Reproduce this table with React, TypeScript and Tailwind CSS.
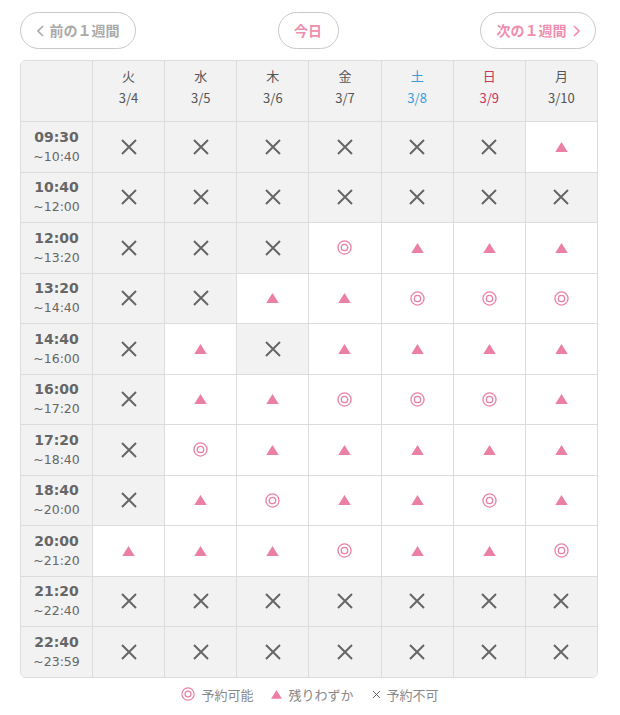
import React from "react";

type Mark = "x" | "t" | "o";

const days = [
  { name: "火", date: "3/4", color: "text-[#555]" },
  { name: "水", date: "3/5", color: "text-[#555]" },
  { name: "木", date: "3/6", color: "text-[#555]" },
  { name: "金", date: "3/7", color: "text-[#555]" },
  { name: "土", date: "3/8", color: "text-[#3b9ad9]" },
  { name: "日", date: "3/9", color: "text-[#c9365f]" },
  { name: "月", date: "3/10", color: "text-[#555]" },
];

const rows: { from: string; to: string; marks: Mark[] }[] = [
  { from: "09:30", to: "~10:40", marks: ["x", "x", "x", "x", "x", "x", "t"] },
  { from: "10:40", to: "~12:00", marks: ["x", "x", "x", "x", "x", "x", "x"] },
  { from: "12:00", to: "~13:20", marks: ["x", "x", "x", "o", "t", "t", "t"] },
  { from: "13:20", to: "~14:40", marks: ["x", "x", "t", "t", "o", "o", "o"] },
  { from: "14:40", to: "~16:00", marks: ["x", "t", "x", "t", "t", "t", "t"] },
  { from: "16:00", to: "~17:20", marks: ["x", "t", "t", "o", "o", "o", "t"] },
  { from: "17:20", to: "~18:40", marks: ["x", "o", "t", "t", "t", "t", "t"] },
  { from: "18:40", to: "~20:00", marks: ["x", "t", "o", "t", "t", "o", "t"] },
  { from: "20:00", to: "~21:20", marks: ["t", "t", "t", "o", "t", "t", "o"] },
  { from: "21:20", to: "~22:40", marks: ["x", "x", "x", "x", "x", "x", "x"] },
  { from: "22:40", to: "~23:59", marks: ["x", "x", "x", "x", "x", "x", "x"] },
];

function Cross({ size = 18 }: { size?: number }) {
  return (
    <svg width={size} height={size} viewBox="0 0 18 18">
      <path d="M2 2 L16 16 M16 2 L2 16" stroke="#666" strokeWidth="2" />
    </svg>
  );
}

function Tri({ w = 13 }: { w?: number }) {
  return (
    <svg width={w} height={w * 0.8} viewBox="0 0 13 10.4">
      <path d="M6.5 0 L13 10.4 L0 10.4 Z" fill="#eb80a3" />
    </svg>
  );
}

function Double({ size = 15 }: { size?: number }) {
  return (
    <svg width={size} height={size} viewBox="0 0 16 16">
      <circle cx="8" cy="8" r="7" fill="none" stroke="#eb80a3" strokeWidth="1.4" />
      <circle cx="8" cy="8" r="3.4" fill="none" stroke="#eb80a3" strokeWidth="1.4" />
    </svg>
  );
}

function Chevron({ dir, color }: { dir: "l" | "r"; color: string }) {
  return (
    <svg width="7" height="12" viewBox="0 0 7 12">
      <path
        d={dir === "l" ? "M6 1 L1 6 L6 11" : "M1 1 L6 6 L1 11"}
        fill="none"
        stroke={color}
        strokeWidth="1.6"
      />
    </svg>
  );
}

export default function App() {
  return (
    <div
      className="w-[620px] h-[715px] bg-white text-[#555]"
      style={{ fontFamily: '"Noto Sans CJK JP", "Noto Sans", sans-serif' }}
    >
      {/* NAV */}
      <div className="flex w-[576px] ml-[20px] items-center justify-between pt-[12px]">
        <button className="flex h-[37px] w-[116px] items-center justify-center gap-[6px] rounded-full border border-[#c8c8c8] text-[14px] font-bold text-[#aaa]">
          <Chevron dir="l" color="#aaa" />
          前の１週間
        </button>
        <button className="flex h-[37px] w-[61px] items-center justify-center rounded-full border border-[#c8c8c8] text-[14px] font-bold text-[#ef8eae]">
          今日
        </button>
        <button className="flex h-[37px] w-[116px] items-center justify-center gap-[6px] rounded-full border border-[#c8c8c8] text-[14px] font-bold text-[#ef8eae]">
          次の１週間
          <Chevron dir="r" color="#ef8eae" />
        </button>
      </div>

      {/* TABLE */}
      <div className="ml-[20px] mt-[11px] w-[578px] overflow-hidden rounded-md border border-[#dcdcdc]">
        <div className="grid grid-cols-[71px_repeat(7,1fr)]">
          <div className="h-[60px] bg-[#f2f2f2]" />
          {days.map((d) => (
            <div
              key={d.date}
              className={`flex h-[60px] flex-col items-center justify-start gap-[3px] pt-[5px] border-l border-[#dcdcdc] bg-[#f2f2f2] text-[13px] leading-[19px] ${d.color}`}
            >
              <span>{d.name}</span>
              <span>{d.date}</span>
            </div>
          ))}

          {rows.map((r) => (
            <React.Fragment key={r.from}>
              <div className="flex h-[50.5px] flex-col items-center justify-center border-t border-[#dcdcdc] bg-[#f2f2f2] leading-[19px]">
                <span
                  className="text-[14px] font-bold text-[#666]"
                  style={{ fontFamily: '"DejaVu Sans", sans-serif' }}
                >
                  {r.from}
                </span>
                <span
                  className="text-[12.5px] text-[#666]"
                  style={{ fontFamily: '"DejaVu Sans", sans-serif' }}
                >
                  {r.to}
                </span>
              </div>
              {r.marks.map((m, i) => (
                <div
                  key={i}
                  className={`flex h-[50.5px] items-center justify-center border-l border-t border-[#dcdcdc] ${
                    m === "x" ? "bg-[#f2f2f2]" : "bg-white"
                  }`}
                >
                  {m === "x" && <Cross />}
                  {m === "t" && <Tri />}
                  {m === "o" && <Double />}
                </div>
              ))}
            </React.Fragment>
          ))}
        </div>
      </div>

      {/* LEGEND */}
      <div className="mt-[7px] flex items-center justify-center gap-[18px] text-[13px] text-[#888]">
        <span className="flex items-center gap-[6px]">
          <Double size={14} />
          予約可能
        </span>
        <span className="flex items-center gap-[6px]">
          <Tri w={11} />
          残りわずか
        </span>
        <span className="flex items-center gap-[6px]">
          <Cross size={9} />
          予約不可
        </span>
      </div>
    </div>
  );
}
